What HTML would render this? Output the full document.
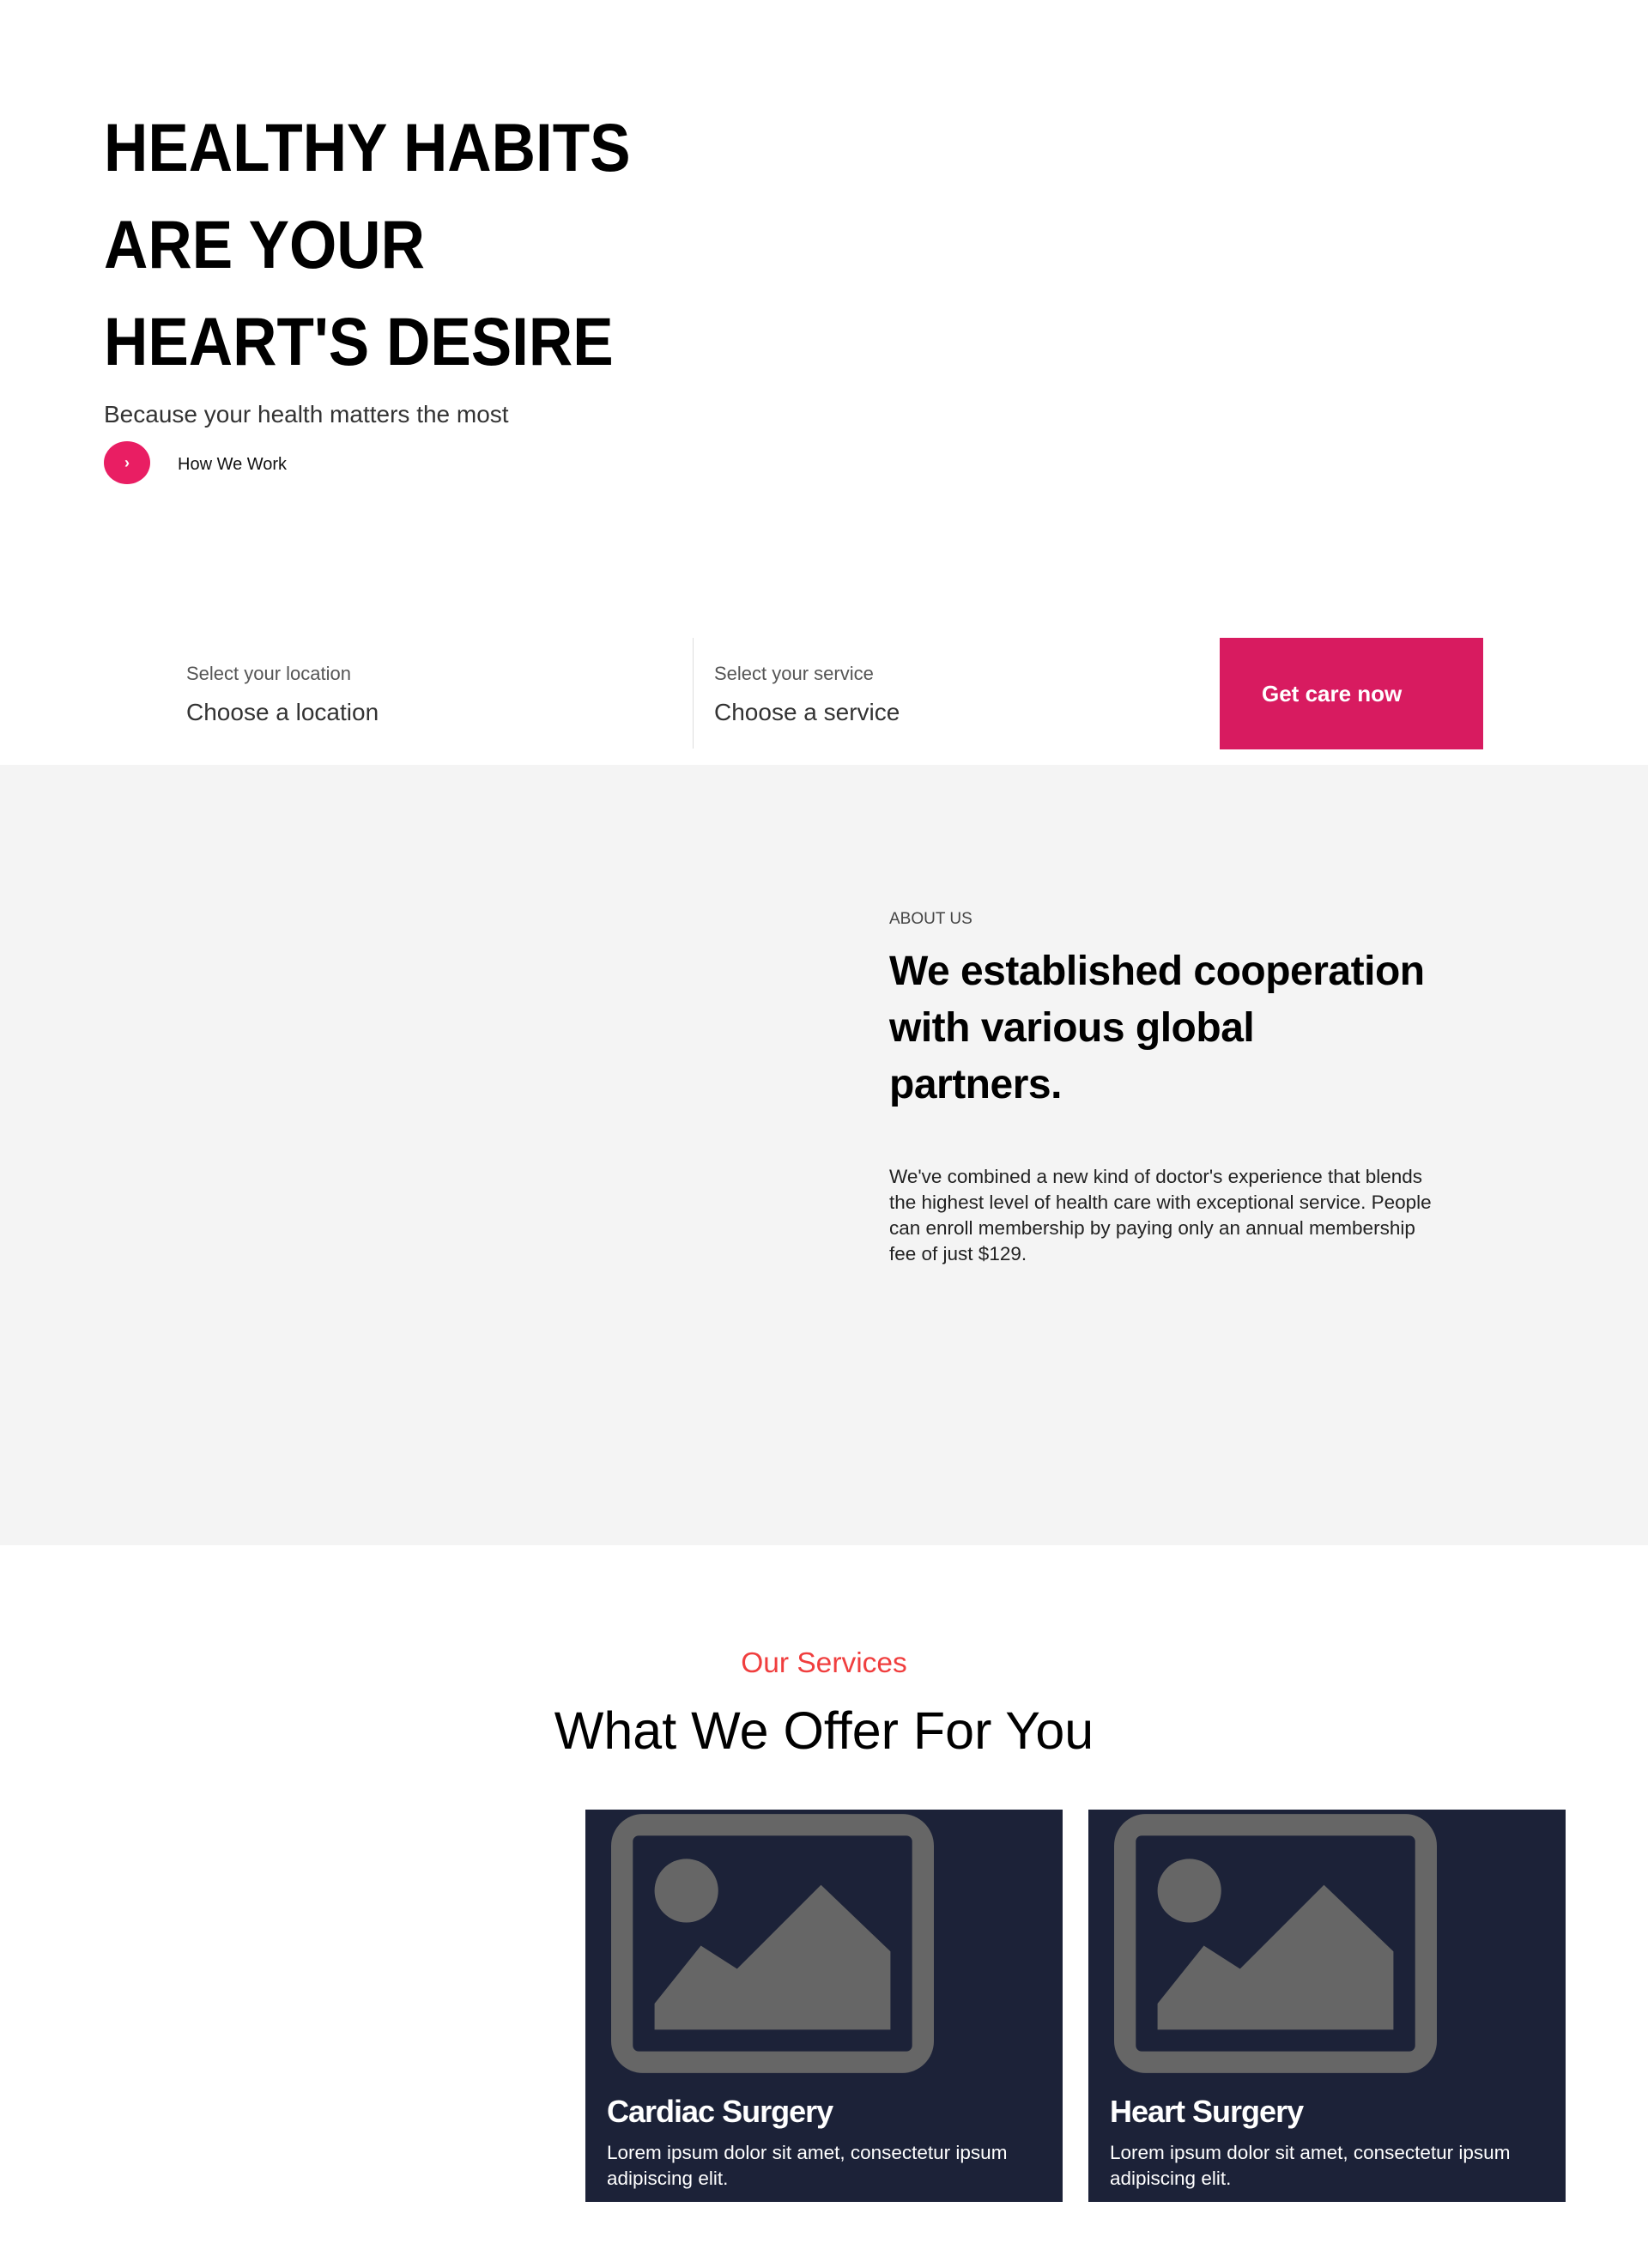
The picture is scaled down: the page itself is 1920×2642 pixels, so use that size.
<!DOCTYPE html>
<html><head><meta charset="utf-8"><style>
*{margin:0;padding:0;box-sizing:border-box}
body{width:1920px;height:2642px;background:#fff;font-family:"Liberation Sans",sans-serif;position:relative;overflow:hidden}
.a{position:absolute;white-space:nowrap}
h1{position:absolute;left:121px;top:115px;font-size:79px;line-height:113px;font-weight:700;color:#000;transform:scaleX(0.9);transform-origin:left top;white-space:nowrap}
.card{position:absolute;top:2108px;width:556px;height:457px;background:#1c2238}
.card svg{position:absolute;left:30px;top:5px}
.card .t{position:absolute;left:25px;top:331px;font-size:36px;font-weight:700;color:#fff;letter-spacing:-1px}
.card .d{position:absolute;left:25px;top:385px;font-size:22.5px;line-height:30px;color:#fff;width:530px}
</style></head><body>
<h1>HEALTHY HABITS<br>ARE YOUR<br>HEART'S DESIRE</h1>
<div class="a" style="left:121px;top:467px;font-size:28px;color:#333">Because your health matters the most</div>
<div class="a" style="left:121px;top:514px;width:54px;height:50px;border-radius:50%;background:#e91e63;color:#fff;font-size:18px;font-weight:700;text-align:center;line-height:50px">›</div>
<div class="a" style="left:207px;top:530px;font-size:20px;color:#111">How We Work</div>

<div class="a" style="left:807px;top:743px;width:1px;height:129px;background:#ddd"></div>
<div class="a" style="left:217px;top:772px;font-size:22px;color:#555">Select your location</div>
<div class="a" style="left:217px;top:814px;font-size:28px;color:#333">Choose a location</div>
<div class="a" style="left:832px;top:772px;font-size:22px;color:#555">Select your service</div>
<div class="a" style="left:832px;top:814px;font-size:28px;color:#333">Choose a service</div>
<div class="a" style="left:1421px;top:743px;width:307px;height:130px;background:#d81b60;color:#fff;font-size:26px;font-weight:700;padding-left:49px;line-height:130px">Get care now</div>

<div class="a" style="left:0;top:891px;width:1920px;height:909px;background:#f4f4f4"></div>
<div class="a" style="left:1036px;top:1060px;font-size:19px;color:#444">ABOUT US</div>
<div class="a" style="left:1036px;top:1099px;font-size:48px;line-height:66px;font-weight:700;color:#000;letter-spacing:-0.5px">We established cooperation<br>with various global<br>partners.</div>
<div class="a" style="left:1036px;top:1356px;font-size:22.5px;line-height:30px;color:#222">We've combined a new kind of doctor's experience that blends<br>the highest level of health care with exceptional service. People<br>can enroll membership by paying only an annual membership<br>fee of just $129.</div>

<div class="a" style="left:0;width:1920px;text-align:center;top:1919px;font-size:33.5px;color:#f03e3e">Our Services</div>
<div class="a" style="left:0;width:1920px;text-align:center;top:1981px;font-size:61px;color:#000">What We Offer For You</div>

<div class="card" style="left:682px">
<svg width="376" height="302" viewBox="0 0 223 179"><path fill="#666" fill-rule="evenodd" d="M22 0H201A22 22 0 0 1 223 22V157A22 22 0 0 1 201 179H22A22 22 0 0 1 0 157V22A22 22 0 0 1 22 0ZM19 15H204A4 4 0 0 1 208 19V160A4 4 0 0 1 204 164H19A4 4 0 0 1 15 160V19A4 4 0 0 1 19 15Z"/><circle cx="52" cy="53" r="22" fill="#666"/><path fill="#666" d="M30 131L62 91L87 107L145 49L193 95V149H30Z"/></svg>
<div class="t">Cardiac Surgery</div>
<div class="d">Lorem ipsum dolor sit amet, consectetur ipsum<br>adipiscing elit.</div>
</div>
<div class="card" style="left:1268px">
<svg width="376" height="302" viewBox="0 0 223 179"><path fill="#666" fill-rule="evenodd" d="M22 0H201A22 22 0 0 1 223 22V157A22 22 0 0 1 201 179H22A22 22 0 0 1 0 157V22A22 22 0 0 1 22 0ZM19 15H204A4 4 0 0 1 208 19V160A4 4 0 0 1 204 164H19A4 4 0 0 1 15 160V19A4 4 0 0 1 19 15Z"/><circle cx="52" cy="53" r="22" fill="#666"/><path fill="#666" d="M30 131L62 91L87 107L145 49L193 95V149H30Z"/></svg>
<div class="t">Heart Surgery</div>
<div class="d">Lorem ipsum dolor sit amet, consectetur ipsum<br>adipiscing elit.</div>
</div>
</body></html>
